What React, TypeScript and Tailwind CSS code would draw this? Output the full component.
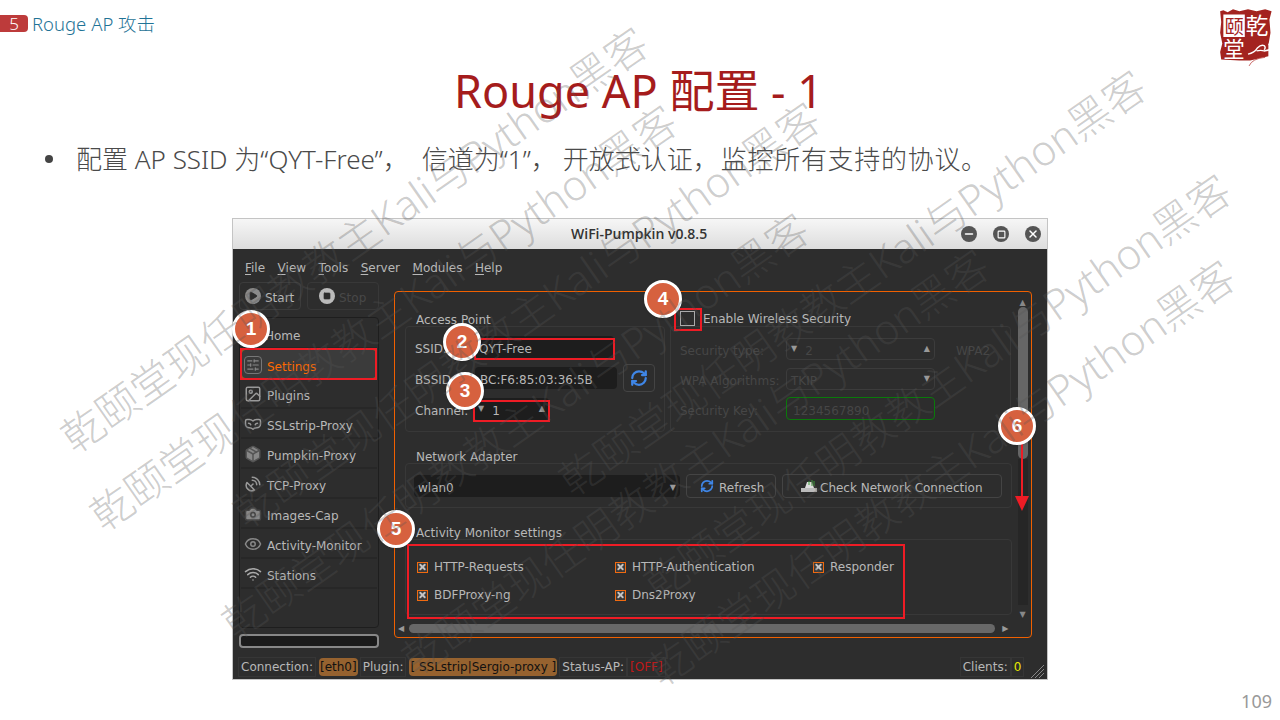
import { Camera, Eye, Image, Minus, Package, Play, RefreshCw, SatelliteDish, SlidersHorizontal, Square, VenetianMask, Wifi, X } from 'lucide-react'
import type { ReactNode } from 'react'

const ui = "font-['DejaVu_Sans',sans-serif]"
// text sits a little low in the Qt widgets
const nudge = 'pt-[4px]'
const cell = 'outline outline-offset-2 outline-[#363636]'

const navItems: { label: string; icon: ReactNode; active?: boolean }[] = [
  { label: 'Home', icon: <span className="h-4 w-4" /> },
  { label: 'Settings', icon: <SlidersHorizontal className="h-[18px] w-[18px] rounded-sm border border-[#777] p-px text-[#888]" />, active: true },
  { label: 'Plugins', icon: <Image className="h-[18px] w-[18px] text-[#999]" /> },
  { label: 'SSLstrip-Proxy', icon: <VenetianMask className="h-[18px] w-[18px] text-[#999]" /> },
  { label: 'Pumpkin-Proxy', icon: <Package className="h-[18px] w-[18px] fill-[#888] text-[#555]" /> },
  { label: 'TCP-Proxy', icon: <SatelliteDish className="h-[18px] w-[18px] text-[#999]" /> },
  { label: 'Images-Cap', icon: <Camera className="h-[18px] w-[18px] fill-[#888] text-[#444]" /> },
  { label: 'Activity-Monitor', icon: <Eye className="h-[18px] w-[18px] text-[#888]" /> },
  { label: 'Stations', icon: <Wifi className="h-[18px] w-[18px] text-[#aaa]" /> },
]

const marks = [
  { n: 1, x: 251, y: 329 },
  { n: 2, x: 462, y: 342 },
  { n: 3, x: 465, y: 391 },
  { n: 4, x: 663, y: 299 },
  { n: 5, x: 396, y: 529 },
  { n: 6, x: 1017, y: 426 },
]

const redBoxes = [
  { l: 240, t: 348, w: 137, h: 32 },
  { l: 474, t: 338, w: 141, h: 22 },
  { l: 473, t: 400, w: 77, h: 22 },
  { l: 674, t: 308, w: 28, h: 23 },
  { l: 407, t: 544, w: 498, h: 75 },
]

const watermarks = [
  { x: 80, y: 462 },
  { x: 109, y: 540 },
  { x: 241, y: 648 },
  { x: 421, y: 684 },
  { x: 578, y: 505 },
  { x: 663, y: 609 },
  { x: 667, y: 695 },
  { x: 252, y: 537 },
]

function Uline({ children }: { children: string }) {
  return (
    <span>
      <span className="underline underline-offset-2">{children[0]}</span>
      {children.slice(1)}
    </span>
  )
}

function Group({ title, className, frame, children }: { title: ReactNode; className?: string; frame: string; children?: ReactNode }) {
  return (
    <div className={className}>
      {title}
      <div className={`rounded-sm border border-[#383838] ${frame}`}>{children}</div>
    </div>
  )
}

function Combo({ text, width, up, down, tone }: { text: string; width: string; up?: boolean; down?: boolean; tone: string }) {
  return (
    <div className={`flex h-[22px] items-center rounded-sm ${width} ${tone}`}>
      {up && <span className="ml-1 mr-2 text-[8px] text-[#999]">▼</span>}
      <span className={`${nudge} ${up ? '' : 'ml-1'}`}>{text}</span>
      <span className="ml-auto mr-1 text-[8px] text-[#999]">{down ? '▼' : '▲'}</span>
    </div>
  )
}

function Check2({ label }: { label: string }) {
  return (
    <div className="flex items-center gap-[6px]">
      <span className="flex h-[11px] w-[11px] items-center justify-center border border-[#f06a10] bg-[#3a3a3a]">
        <X className="h-[10px] w-[10px] text-[#c4c4c4]" strokeWidth={5} />
      </span>
      <span>{label}</span>
    </div>
  )
}

function Seal() {
  return (
    <svg viewBox="0 0 56 56" className="h-[60px] w-[60px]">
      <path d="M2 4 L5 3 L9 5 L14 2 L20 4 L28 2 L36 4 L44 2 L50 4 L48 12 L49 24 L47 36 L47 46 L30 50 L20 50 L3 49 L2 42 L4 34 L2 24 L3 14 Z" fill="#a3231f" />
      <rect x="5" y="7" width="20" height="21" fill="#fff" />
      <text x="6" y="25" fontSize="18" fill="#a3231f" fontFamily="'Noto Sans CJK SC'">颐</text>
      <text x="26" y="25" fontSize="21" fill="#fff" fontFamily="'Noto Sans CJK SC'">乾</text>
      <text x="5" y="47" fontSize="20" fill="#fff" fontFamily="'Noto Sans CJK SC'">堂</text>
      <path d="M28 44 q6 -1 9 -6 q3 -3 6 -2 q2 2 0 4 M36 41 q4 -1 7 0 q5 0 9 -4 q-1 -3 -5 -2" fill="none" stroke="#fff" strokeWidth="1.3" />
      <path d="M44 47 q-12 1 -15 8" fill="none" stroke="#c0504d" strokeWidth="0.8" />
    </svg>
  )
}

function AppWindow() {
  return (
    <div className={`ml-[232px] flex h-[462px] w-[816px] flex-col border border-[#c4c4c4] text-[12px] leading-[14px] text-[#b8b8b8] ${ui}`}>
      <div className="flex h-[30px] shrink-0 items-center bg-gradient-to-b from-[#f6f6f6] to-[#dddddd]">
        <div className="flex-1 pl-[338px] font-['Open_Sans',sans-serif] text-[14px] font-semibold text-[#333]">WiFi-Pumpkin v0.8.5</div>
        <div className="flex gap-4 pr-[6px]">
          <span className="flex h-4 w-4 items-center justify-center rounded-full bg-[#555]"><Minus className="h-3 w-3 text-white" strokeWidth={3} /></span>
          <span className="flex h-4 w-4 items-center justify-center rounded-full bg-[#555]"><Square className="h-[9px] w-[9px] text-white" strokeWidth={3} /></span>
          <span className="flex h-4 w-4 items-center justify-center rounded-full bg-[#555]"><X className="h-3 w-3 text-white" strokeWidth={3} /></span>
        </div>
      </div>

      <div className="flex min-h-0 flex-1 flex-col bg-[#2d2d2d]">
        <div className="flex h-[33px] shrink-0 items-center gap-[12.5px] pl-3 pt-[5px]">
          {['File', 'View', 'Tools', 'Server', 'Modules', 'Help'].map((m) => (
            <Uline key={m}>{m}</Uline>
          ))}
        </div>

        <div className="flex min-h-0 flex-1 pl-[6px] pr-[15px]">
          <div className="flex w-[140px] shrink-0 flex-col">
            <div className="flex gap-[6px]">
              <div className="flex h-[28px] w-[62px] items-center gap-[4px] rounded-sm border border-[#3c3c3c] pl-[5px]">
                <span className="flex h-4 w-4 items-center justify-center rounded-full bg-[#8a8a8a]"><Play className="h-[10px] w-[10px] fill-[#2d2d2d] text-[#2d2d2d]" /></span>
                <span className={nudge}>Start</span>
              </div>
              <div className="flex h-[28px] w-[72px] items-center gap-[4px] rounded-sm border border-[#383838] pl-[11px] text-[#484848]">
                <span className="flex h-4 w-4 items-center justify-center rounded-full bg-[#bbb]"><Square className="h-[8px] w-[8px] fill-[#2d2d2d] text-[#2d2d2d]" /></span>
                <span className={nudge}>Stop</span>
              </div>
            </div>
            <div className="mt-[7px] h-[311px] rounded-sm border border-[#1e1e1e] px-[1px] pt-[1px]">
              {navItems.map((item) => (
                <div
                  key={item.label}
                  className={`flex h-[30px] items-center gap-[4px] pt-[2px] ${
                    item.active ? 'rounded-sm border border-[#b8651f] bg-[#3b3b3b] pl-[2px] text-[#ff6a00]' : 'border-b-2 border-[#272727] pl-[3px]'
                  }`}
                >
                  {item.icon}
                  <span className={`pl-[1px] ${nudge}`}>{item.label}</span>
                </div>
              ))}
            </div>
            <div className="mt-[6px] h-[14px] rounded-[4px] border-2 border-[#888] bg-[#1b1b1b]" />
          </div>

          <div className="ml-[15px] mt-[9px] flex h-[347px] w-[638px] flex-col rounded-sm border border-[#f06000]">
            <div className="flex min-h-0 flex-1 pl-[10px] pt-[16px]">
              <div className="w-[607px]">
                <div className="flex gap-[5px]">
                  <Group
                    className="w-[260px]"
                    title={<div className="h-[18px] pl-[11px] pt-[5px]">Access Point</div>}
                    frame="h-[106px] px-[9px] pt-[9px]"
                  >
                    <div className="flex h-[22px] items-center">
                      <span className={`w-[60px] ${nudge}`}>SSID:</span>
                      <div className={`flex h-[22px] w-[139px] items-center rounded-sm bg-[#1d1d1d] pl-[4px] ${nudge}`}>QYT-Free</div>
                    </div>
                    <div className="mt-[6px] flex h-[28px] items-center">
                      <span className={`w-[60px] ${nudge}`}>BSSID:</span>
                      <div className={`flex h-[22px] w-[142px] items-center rounded-sm bg-[#1d1d1d] pl-[5px] ${nudge}`}>BC:F6:85:03:36:5B</div>
                      <div className="ml-[6px] flex h-[28px] w-[32px] items-center justify-center rounded-sm border border-[#444]">
                        <RefreshCw className="h-[18px] w-[18px] text-[#3f86e6]" strokeWidth={3} />
                      </div>
                    </div>
                    <div className="mt-[6px] flex h-[22px] items-center">
                      <span className={`w-[59px] ${nudge}`}>Channel:</span>
                      <Combo text="1" width="w-[75px]" up tone="bg-[#1d1d1d]" />
                    </div>
                  </Group>
                  <Group
                    className="w-[341px]"
                    title={
                      <div className="flex h-[18px] items-end pl-[10px]">
                        <span className="h-[15px] w-[15px] border border-[#aaa]" />
                        <span className="pl-[8px]">Enable Wireless Security</span>
                      </div>
                    }
                    frame="h-[106px] pl-[9px] pt-[11px] text-[#464646]"
                  >
                    <div className="flex h-[22px] items-center">
                      <span className={`w-[106px] ${nudge}`}>Security type:</span>
                      <Combo text="2" width="w-[149px]" up tone="border border-[#3c3c3c]" />
                      <span className={`pl-[21px] ${nudge}`}>WPA2</span>
                    </div>
                    <div className="mt-[8px] flex h-[22px] items-center">
                      <span className={`w-[106px] ${nudge}`}>WPA Algorithms:</span>
                      <Combo text="TKIP" width="w-[149px]" down tone="border border-[#3c3c3c]" />
                    </div>
                    <div className="mt-[7px] flex h-[23px] items-center">
                      <span className={`w-[106px] ${nudge}`}>Security Key:</span>
                      <div className={`flex h-[23px] w-[149px] items-center rounded-sm border border-[#0a7a0a] pl-[6px] ${nudge}`}>1234567890</div>
                    </div>
                  </Group>
                </div>

                <Group
                  className="mt-[16px]"
                  title={<div className="h-[15px] pl-[11px] pt-[2px]">Network Adapter</div>}
                  frame="flex h-[45px] items-center gap-[6px] pl-[8px]"
                >
                  <div className={`flex h-[22px] w-[266px] items-center rounded-sm bg-[#1d1d1d] pl-[4px] ${nudge}`}>
                    wlan0
                    <span className="ml-auto mr-1 text-[8px] text-[#999]">▼</span>
                  </div>
                  <div className="flex h-[24px] w-[90px] items-center gap-[5px] rounded-sm border border-[#444] pl-[13px]">
                    <RefreshCw className="h-[14px] w-[14px] text-[#3f86e6]" strokeWidth={3} />
                    <span className={nudge}>Refresh</span>
                  </div>
                  <div className="flex h-[24px] w-[220px] items-center gap-[2px] rounded-sm border border-[#444] pl-[17px]">
                    <svg viewBox="0 0 18 14" className="h-[14px] w-[18px]">
                      <rect x="1" y="9" width="16" height="4" fill="#bbb" />
                      <path d="M5 9 L7 3 H12 L14 9 Z" fill="#ddd" />
                      <path d="M12 1 v6 M14 2 v5 M9 2 v4" stroke="#3a9a3a" strokeWidth="1" />
                    </svg>
                    <span className={nudge}>Check Network Connection</span>
                  </div>
                </Group>

                <Group
                  className="mt-[16px]"
                  title={<div className="h-[15px] pl-[11px] pt-[2px]">Activity Monitor settings</div>}
                  frame="h-[76px] pl-[11px] pt-[20px]"
                >
                  <div className="grid w-[594px] grid-cols-[198px_198px_198px] gap-y-[14px]">
                    <Check2 label="HTTP-Requests" />
                    <Check2 label="HTTP-Authentication" />
                    <Check2 label="Responder" />
                    <Check2 label="BDFProxy-ng" />
                    <Check2 label="Dns2Proxy" />
                  </div>
                </Group>
              </div>
              <div className="-mt-[9px] ml-[5px] flex h-[320px] w-[11px] flex-col items-center">
                <span className="text-[8px] leading-[8px] text-[#888]">▲</span>
                <div className="h-[152px] w-[10px] rounded-[5px] bg-[#666]" />
                <div className="h-[146px] w-[10px] bg-[#262626]" />
                <span className="mt-auto text-[8px] leading-[8px] text-[#888]">▼</span>
              </div>
            </div>
            <div className="flex h-[17px] items-center pl-[3px]">
              <span className="text-[8px] text-[#999]">◀</span>
              <div className="ml-[5px] h-[9px] w-[586px] rounded-[5px] bg-[#686868]" />
              <span className="ml-[7px] text-[8px] text-[#999]">▶</span>
            </div>
          </div>
        </div>

        <div className="flex h-[30px] shrink-0 items-start pl-[8px] pt-[7px]">
          <div className="flex h-[22px] items-center">
            <span className={cell}>Connection:</span>
            <span className="ml-[6px] flex h-[18px] items-center rounded-sm bg-[#96622f] px-[1px] text-[#111]">[eth0]</span>
            <span className={`ml-[5px] ${cell}`}>Plugin:</span>
            <span className="ml-[6px] flex h-[18px] items-center rounded-sm bg-[#96622f] px-[1px] text-[#111]">[ SSLstrip|Sergio-proxy ]</span>
            <span className={`ml-[5px] ${cell}`}>Status-AP:</span>
            <span className={`ml-[6px] text-[#c01818] ${cell}`}>[OFF]</span>
            <span className={`ml-[300px] ${cell}`}>Clients:</span>
            <span className={`ml-[6px] text-[#e8e800] ${cell}`}>0</span>
          </div>
          <svg viewBox="0 0 14 14" className="ml-auto mr-[3px] mt-[8px] h-[14px] w-[14px]">
            <path d="M14 1 L1 14 M14 5 L5 14 M14 9 L9 14" stroke="#888" strokeWidth="1" />
          </svg>
        </div>
      </div>
    </div>
  )
}

export default function App() {
  return (
    <div className="relative flex h-[720px] w-[1280px] flex-col overflow-hidden bg-white font-['Noto_Sans','Noto_Sans_CJK_SC',sans-serif]">
      <div className="flex h-[52px] items-start pt-[15px]">
        <span className="flex h-[17px] w-[28px] items-center justify-center rounded-r-sm bg-[#bd3b3b] text-[17px] font-light text-white">5</span>
        <span className="pl-[4px] text-[18.5px] leading-[18px] font-light text-[#1f7396]">Rouge AP 攻击</span>
        <div className="ml-auto -mt-[8px] mr-[2px]"><Seal /></div>
      </div>
      <h1 className="h-[91px] pr-[3px] pt-[11px] text-center text-[45px] leading-[56px] text-[#a51c1c]">Rouge AP 配置 - 1</h1>
      <div className="flex items-center pl-[45px] text-[26px] leading-[32px] font-light text-[#4a4a4a]">
        <span className="mr-[23px] h-2 w-2 rounded-full bg-[#444]" />
        <span>
          配置 AP SSID 为“QYT-Free”，
          <span className="ml-[13px]">信道为“1”，</span>
          <span className="ml-[6px]">开放式认证，</span>
          <span className="ml-[2px] tracking-[0.7px]">监控所有支持的协议。</span>
        </span>
      </div>
      <div className="mt-[43px]"><AppWindow /></div>
      <div className="mt-[10px] pr-[8px] text-right text-[18px] leading-[22px] text-[#999]">109</div>

      {redBoxes.map((b) => (
        <div key={b.l} className="absolute border-2 border-[#ee1c25]" style={{ left: b.l, top: b.t, width: b.w, height: b.h }} />
      ))}
      <div className="absolute left-[1021px] top-[440px] h-[58px] w-[2px] bg-[#ee1c25]" />
      <div className="absolute left-[1015px] top-[496px] h-0 w-0 border-x-[7px] border-t-[15px] border-x-transparent border-t-[#ee1c25]" />
      {marks.map((m) => (
        <div
          key={m.n}
          className="absolute flex h-[38px] w-[38px] items-center justify-center rounded-full border-[3px] border-white bg-[#d6613f] font-['Liberation_Sans',sans-serif] text-[19px] font-bold text-white shadow-sm"
          style={{ left: m.x - 19, top: m.y - 19 }}
        >
          {m.n}
        </div>
      ))}
      {watermarks.map((w) => (
        <div
          key={`${w.x}-${w.y}`}
          className="pointer-events-none absolute origin-bottom-left -rotate-[35deg] whitespace-nowrap font-['Noto_Sans','Noto_Sans_CJK_SC',sans-serif] text-[42px] leading-[50px] font-light text-[#555]/30"
          style={{ left: w.x, top: w.y - 50 }}
        >
          乾颐堂现任明教教主Kali与Python黑客
        </div>
      ))}
    </div>
  )
}
